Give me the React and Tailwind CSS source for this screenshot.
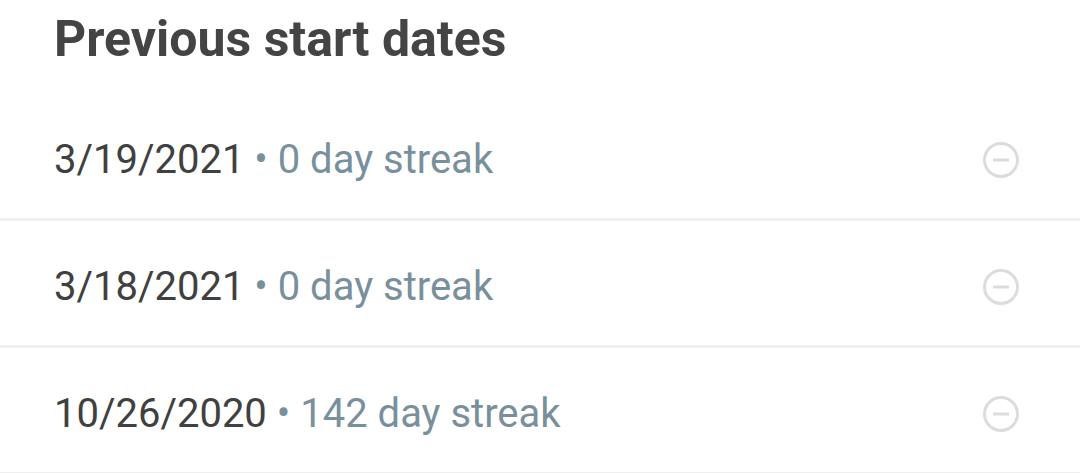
import React from 'react';

const entries = [
  { date: '3/19/2021', streak: '0 day streak' },
  { date: '3/18/2021', streak: '0 day streak' },
  { date: '10/26/2020', streak: '142 day streak' },
];

function RemoveIcon() {
  return (
    <svg width="38" height="38" viewBox="0 0 38 38" fill="none">
      <circle cx="19" cy="19" r="16.5" stroke="#dcdcdc" strokeWidth="3" />
      <line x1="11" y1="19" x2="27" y2="19" stroke="#dcdcdc" strokeWidth="3" />
    </svg>
  );
}

export default function App() {
  return (
    <div className="w-[1080px] h-[473px] bg-white overflow-hidden" style={{ fontFamily: 'Roboto, sans-serif' }}>
      <h2 className="px-[54px] pt-[11px] h-[94px] text-[50px] font-bold text-[#444444] leading-[56px]">
        Previous start dates
      </h2>
      <ul>
        {entries.map((e) => (
          <li key={e.date} className="h-[127px] flex items-center justify-between pt-[7px] pl-[54px] pr-[60px] border-b-[3px] border-[#efefef]">
            <p className="text-[40px] leading-none text-[#404040]">
              {e.date}
              <span className="text-[#78909c]"> • {e.streak}</span>
            </p>
            <RemoveIcon />
          </li>
        ))}
      </ul>
    </div>
  );
}
